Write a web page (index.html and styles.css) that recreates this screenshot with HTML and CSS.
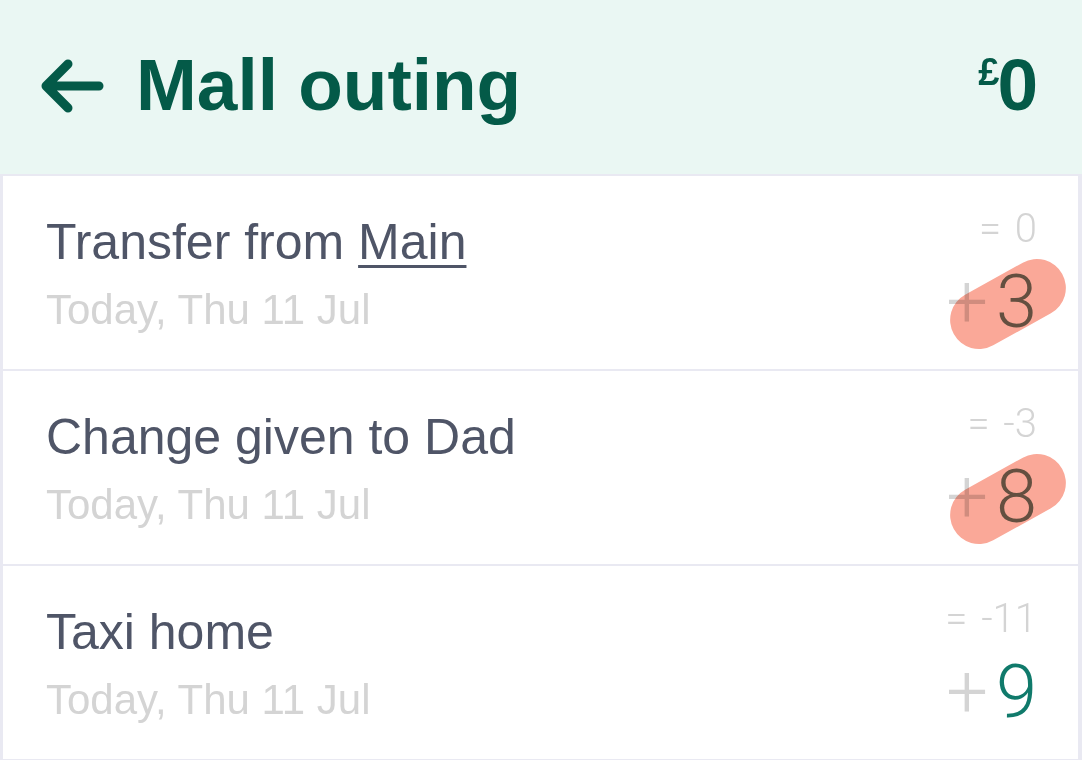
FILE: index.html
```html
<!DOCTYPE html>
<html lang="en">
<head>
    <meta charset="UTF-8">
    <meta name="viewport" content="width=device-width, initial-scale=1.0">
    <title>Mall outing</title>
    <link rel="stylesheet" href="styles.css">
</head>
<body>
    <header class="top">
        <div class="top-left">
            <svg class="back" width="64" height="58" viewBox="0 0 64 58">
                <path d="M59 29 H7 M28 7 L6 29 L28 51" fill="none" stroke="#045a48" stroke-width="9" stroke-linecap="round" stroke-linejoin="round"/>
            </svg>
            <h1>Mall outing</h1>
        </div>
        <div class="total"><span class="cur">£</span>0</div>
    </header>

    <ul class="entries">
        <li class="entry">
            <div class="entry-info">
                <div class="entry-title">Transfer from <u>Main</u></div>
                <div class="entry-date">Today, Thu 11 Jul</div>
            </div>
            <div class="entry-amount">
                <div class="running">= 0</div>
                <div class="value"><span class="plus">+</span><span class="digit marked">3</span></div>
            </div>
        </li>
        <li class="entry">
            <div class="entry-info">
                <div class="entry-title">Change given to Dad</div>
                <div class="entry-date">Today, Thu 11 Jul</div>
            </div>
            <div class="entry-amount">
                <div class="running">= -3</div>
                <div class="value"><span class="plus">+</span><span class="digit marked">8</span></div>
            </div>
        </li>
        <li class="entry">
            <div class="entry-info">
                <div class="entry-title">Taxi home</div>
                <div class="entry-date">Today, Thu 11 Jul</div>
            </div>
            <div class="entry-amount">
                <div class="running">= -11</div>
                <div class="value"><span class="plus">+</span><span class="digit">9</span></div>
            </div>
        </li>
    </ul>
</body>
</html>
```

FILE: styles.css
```css
* {
    box-sizing: border-box;
}
body {
    margin: 0;
    font-family: "Liberation Sans", Arial, sans-serif;
    background-color: #ffffff;
    overflow: hidden;
}
.top {
    height: 174px;
    background-color: #eaf7f3;
    display: flex;
    align-items: center;
    justify-content: space-between;
    padding: 0 44px 5px 40px;
    color: #045a48;
}
.top-left {
    display: flex;
    align-items: center;
    gap: 32px;
}
.back {
    display: block;
    margin-top: 2px;
}
.top h1 {
    margin: 0;
    font-size: 73px;
    font-weight: bold;
    line-height: 80px;
}
.total {
    font-size: 73px;
    font-weight: bold;
    line-height: 80px;
}
.cur {
    font-size: 38px;
    vertical-align: 25px;
    line-height: 38px;
    letter-spacing: -2px;
}
.entries {
    list-style: none;
    margin: 0;
    padding: 0;
    border-top: 2px solid #e9e9f2;
    border-left: 3px solid #e9e9f2;
    border-right: 4px solid #e9e9f2;
}
.entry {
    height: 195px;
    border-bottom: 2px solid #e9e9f2;
    display: flex;
    justify-content: space-between;
    padding: 0 41px 0 43px;
}
.entry-info {
    padding-top: 36px;
}
.entry-title {
    font-size: 50px;
    line-height: 60px;
    color: #4f5567;
}
.entry-title u {
    text-decoration-thickness: 3px;
    text-underline-offset: 6px;
}
.entry-date {
    margin-top: 8px;
    font-size: 42px;
    line-height: 60px;
    color: #d4d4d4;
}
.entry-amount {
    padding-top: 31px;
    text-align: right;
    font-family: Roboto, "Liberation Sans", sans-serif;
    font-weight: 300;
}
.running {
    font-size: 40px;
    line-height: 44px;
    color: #d4d4d4;
    word-spacing: 4px;
}
.value {
    margin-top: 11px;
    font-size: 74px;
    line-height: 80px;
    position: relative;
}
.plus {
    color: #d4d4d4;
    margin-right: 8px;
}
.digit {
    color: #107a6b;
}
.digit.marked {
    color: #66786b;
    position: relative;
}
.digit.marked::after {
    content: "";
    position: absolute;
    left: -50px;
    top: 17px;
    width: 124px;
    height: 58px;
    border-radius: 29px;
    background-color: #faa898;
    transform: rotate(-29deg);
    mix-blend-mode: multiply;
}
```
